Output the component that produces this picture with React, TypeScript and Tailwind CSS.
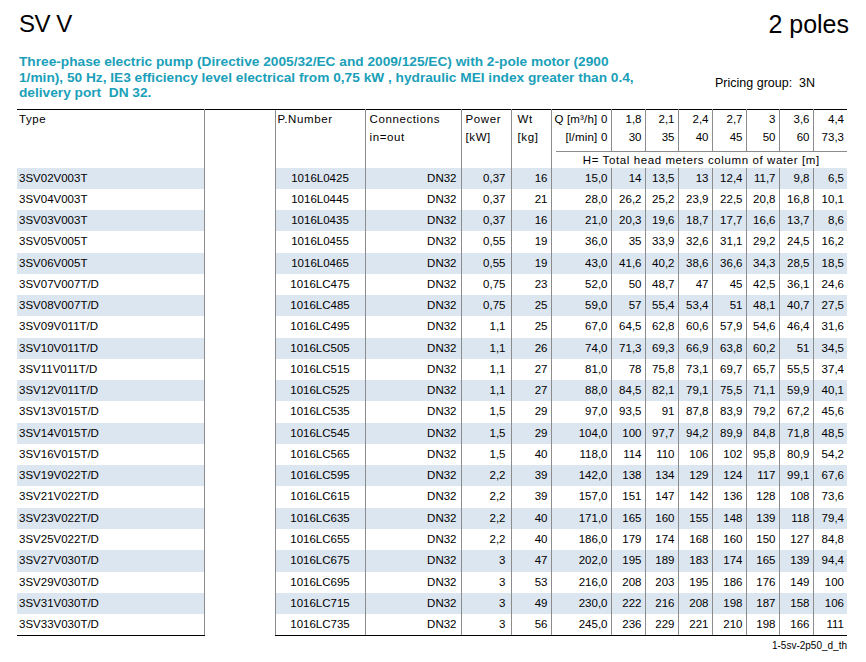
import React from 'react';

// righe del catalogo: tipo, codice, attacchi, potenza, peso, prevalenze
const rows: string[][] = [
  ['3SV02V003T', '1016L0425', 'DN32', '0,37', '16', '15,0', '14', '13,5', '13', '12,4', '11,7', '9,8', '6,5'],
  ['3SV04V003T', '1016L0445', 'DN32', '0,37', '21', '28,0', '26,2', '25,2', '23,9', '22,5', '20,8', '16,8', '10,1'],
  ['3SV03V003T', '1016L0435', 'DN32', '0,37', '16', '21,0', '20,3', '19,6', '18,7', '17,7', '16,6', '13,7', '8,6'],
  ['3SV05V005T', '1016L0455', 'DN32', '0,55', '19', '36,0', '35', '33,9', '32,6', '31,1', '29,2', '24,5', '16,2'],
  ['3SV06V005T', '1016L0465', 'DN32', '0,55', '19', '43,0', '41,6', '40,2', '38,6', '36,6', '34,3', '28,5', '18,5'],
  ['3SV07V007T/D', '1016LC475', 'DN32', '0,75', '23', '52,0', '50', '48,7', '47', '45', '42,5', '36,1', '24,6'],
  ['3SV08V007T/D', '1016LC485', 'DN32', '0,75', '25', '59,0', '57', '55,4', '53,4', '51', '48,1', '40,7', '27,5'],
  ['3SV09V011T/D', '1016LC495', 'DN32', '1,1', '25', '67,0', '64,5', '62,8', '60,6', '57,9', '54,6', '46,4', '31,6'],
  ['3SV10V011T/D', '1016LC505', 'DN32', '1,1', '26', '74,0', '71,3', '69,3', '66,9', '63,8', '60,2', '51', '34,5'],
  ['3SV11V011T/D', '1016LC515', 'DN32', '1,1', '27', '81,0', '78', '75,8', '73,1', '69,7', '65,7', '55,5', '37,4'],
  ['3SV12V011T/D', '1016LC525', 'DN32', '1,1', '27', '88,0', '84,5', '82,1', '79,1', '75,5', '71,1', '59,9', '40,1'],
  ['3SV13V015T/D', '1016LC535', 'DN32', '1,5', '29', '97,0', '93,5', '91', '87,8', '83,9', '79,2', '67,2', '45,6'],
  ['3SV14V015T/D', '1016LC545', 'DN32', '1,5', '29', '104,0', '100', '97,7', '94,2', '89,9', '84,8', '71,8', '48,5'],
  ['3SV16V015T/D', '1016LC565', 'DN32', '1,5', '40', '118,0', '114', '110', '106', '102', '95,8', '80,9', '54,2'],
  ['3SV19V022T/D', '1016LC595', 'DN32', '2,2', '39', '142,0', '138', '134', '129', '124', '117', '99,1', '67,6'],
  ['3SV21V022T/D', '1016LC615', 'DN32', '2,2', '39', '157,0', '151', '147', '142', '136', '128', '108', '73,6'],
  ['3SV23V022T/D', '1016LC635', 'DN32', '2,2', '40', '171,0', '165', '160', '155', '148', '139', '118', '79,4'],
  ['3SV25V022T/D', '1016LC655', 'DN32', '2,2', '40', '186,0', '179', '174', '168', '160', '150', '127', '84,8'],
  ['3SV27V030T/D', '1016LC675', 'DN32', '3', '47', '202,0', '195', '189', '183', '174', '165', '139', '94,4'],
  ['3SV29V030T/D', '1016LC695', 'DN32', '3', '53', '216,0', '208', '203', '195', '186', '176', '149', '100'],
  ['3SV31V030T/D', '1016LC715', 'DN32', '3', '49', '230,0', '222', '216', '208', '198', '187', '158', '106'],
  ['3SV33V030T/D', '1016LC735', 'DN32', '3', '56', '245,0', '236', '229', '221', '210', '198', '166', '111'],
];

const flowM3 = ['1,8', '2,1', '2,4', '2,7', '3', '3,6', '4,4'];
const flowLmin = ['30', '35', '40', '45', '50', '60', '73,3'];

// larghezze colonne in px
const colWidths = [187, 71, 90, 96, 50, 40, 60, 34, 33, 34, 34, 33, 34, 34];

const App = () => {
  return (
    <div className="w-[866px] h-[662px] overflow-hidden bg-white font-['Liberation_Sans',Arial,sans-serif] text-black">
      {/* titolo */}
      <div className="flex items-start justify-between px-[17px] pt-[10px]">
        <h1 className="pl-[2px] text-[24px] leading-[28px] tracking-[-0.5px]">SV V</h1>
        <div className="text-[25px] leading-[28px]">2 poles</div>
      </div>

      {/* descrizione */}
      <div className="mt-[16px] flex px-[17px]">
        <p className="w-[698px] shrink-0 pl-[2px] text-[13.7px] font-bold leading-[15.5px] text-[#1aa0b9]">
          Three-phase electric pump (Directive 2005/32/EC and 2009/125/EC) with 2-pole motor (2900
          <br />
          1/min), 50 Hz, IE3 efficiency level electrical from 0,75 kW , hydraulic MEI index greater than 0.4,
          <br />
          delivery port&nbsp; DN 32.
        </p>
        <div className="pt-[22px] text-[12.5px] leading-[14px]">Pricing group:&nbsp; 3N</div>
      </div>

      {/* tabella */}
      <table className="ml-[17px] mt-[8.5px] w-[830px] table-fixed border-collapse text-[11.5px]">
        <colgroup>
          {colWidths.map((w, i) => (
            <col key={i} style={{ width: w }} />
          ))}
        </colgroup>
        <thead className="tracking-[0.6px]">
          <tr className="h-[19px]">
            <th rowSpan={3} className="border-t border-t-black border-r border-r-[#8c8c8c] p-0 pl-[2px] text-left align-top font-normal leading-[18px]">
              Type
            </th>
            <th rowSpan={3} className="border-t border-t-black p-0" />
            <th rowSpan={3} className="border-t border-t-black border-x border-x-[#8c8c8c] p-0 pl-[2px] text-left align-top font-normal leading-[18px]">
              P.Number
            </th>
            <th rowSpan={3} className="border-t border-t-black border-r border-r-[#8c8c8c] p-0 pl-[4px] text-left align-top font-normal leading-[18px]">
              Connections
              <br />
              in=out
            </th>
            <th rowSpan={3} className="border-t border-t-black border-r border-r-[#8c8c8c] p-0 pl-[4px] text-left align-top font-normal leading-[18px]">
              Power
              <br />
              [kW]
            </th>
            <th rowSpan={3} className="border-t border-t-black border-r border-r-[#8c8c8c] p-0 pl-[6px] text-left align-top font-normal leading-[18px]">
              Wt
              <br />
              [kg]
            </th>
            <th className="border-t border-t-black border-r border-r-[#8c8c8c] p-0 pr-[3px] text-right font-normal leading-[18px] whitespace-nowrap tracking-[0.2px]">
              Q [m³/h] 0
            </th>
            {flowM3.map((q, i) => (
              <th
                key={q}
                className={`border-t border-t-black p-0 pr-[3px] text-right font-normal leading-[18px] tracking-normal ${
                  i < flowM3.length - 1 ? 'border-r border-r-[#8c8c8c]' : ''
                }`}
              >
                {q}
              </th>
            ))}
          </tr>
          <tr className="h-[22px]">
            <th className="border-r border-r-[#8c8c8c] p-0 pr-[3px] text-right align-top font-normal leading-[17px] tracking-[0.2px]">
              [l/min] 0
            </th>
            {flowLmin.map((q, i) => (
              <th
                key={q}
                className={`p-0 pr-[3px] text-right align-top font-normal leading-[17px] tracking-normal ${
                  i < flowLmin.length - 1 ? 'border-r border-r-[#8c8c8c]' : ''
                }`}
              >
                {q}
              </th>
            ))}
          </tr>
          <tr className="h-[17px]">
            <th colSpan={8} className="p-0 font-normal">
              <div className="ml-[4px] border-t border-[#8c8c8c] text-center leading-[16px]">
                H= Total head meters column of water [m]
              </div>
            </th>
          </tr>
        </thead>
        <tbody>
          {rows.map((r, i) => {
            const stripe = i % 2 === 0 ? 'bg-[#dce6f1]' : '';
            const last = i === rows.length - 1 ? 'border-b border-b-black' : '';
            return (
              <tr key={r[0]} className="h-[21.27px]">
                <td className={`border-r border-r-[#8c8c8c] p-0 pl-[2px] ${stripe} ${last}`}>{r[0]}</td>
                <td className="bg-white p-0" />
                <td className={`border-x border-x-[#8c8c8c] p-0 text-center ${stripe} ${last}`}>{r[1]}</td>
                <td className={`border-r border-r-[#8c8c8c] p-0 pr-[4px] text-right ${stripe} ${last}`}>{r[2]}</td>
                <td className={`border-r border-r-[#8c8c8c] p-0 pr-[5px] text-right ${stripe} ${last}`}>{r[3]}</td>
                <td className={`border-r border-r-[#8c8c8c] p-0 pr-[3px] text-right ${stripe} ${last}`}>{r[4]}</td>
                {r.slice(5).map((v, j) => (
                  <td
                    key={j}
                    className={`p-0 pr-[3px] text-right ${stripe} ${last} ${
                      j < 7 ? 'border-r border-r-[#8c8c8c]' : ''
                    }`}
                  >
                    {v}
                  </td>
                ))}
              </tr>
            );
          })}
        </tbody>
      </table>

      {/* codice pagina */}
      <div className="ml-[17px] mt-[4px] w-[830px] text-right text-[10px] leading-[12px]">1-5sv-2p50_d_th</div>
    </div>
  );
};

export default App;
